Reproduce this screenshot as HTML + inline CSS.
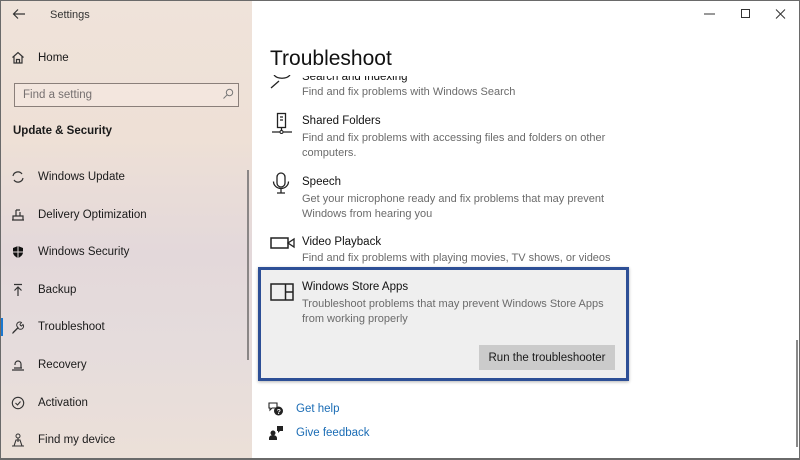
<!DOCTYPE html>
<html><head><meta charset="utf-8"><style>
*{margin:0;padding:0;box-sizing:border-box}
body{width:800px;height:460px;overflow:hidden;font-family:"Liberation Sans",sans-serif;background:#fff;position:relative}
.frame{position:absolute;inset:0;border:1px solid #6a6a6a;border-bottom-width:2px;pointer-events:none;z-index:9}
.side{position:absolute;left:0;top:0;width:252px;height:460px;background:linear-gradient(180deg,#efe3da 0%,#eee0d6 30%,#e3d8da 55%,#e5dcdc 75%,#ece0d8 100%)}
.t{position:absolute;white-space:nowrap;margin-top:2px}
.nav{position:absolute;left:38px;font-size:11.5px;color:#1a1a1a;margin-top:2px}
.ic{position:absolute;left:11px}
.main .ti{position:absolute;left:302px;font-size:11.5px;color:#111}
.main .d{position:absolute;left:302px;font-size:11px;color:#6b6b6b;line-height:15px;margin-top:2px}
</style></head><body>
<div class="side">
 <svg class="ic" style="left:12px;top:8px" width="14" height="12" viewBox="0 0 14 12"><path d="M13 6H2M6 1.5L1.5 6 6 10.5" fill="none" stroke="#333" stroke-width="1.2"/></svg>
 <div class="t" style="left:50px;top:7px;font-size:11px;color:#333">Settings</div>
 <svg class="ic" style="top:51px" width="14" height="13" viewBox="0 0 14 13"><path d="M1.5 6.5L7 1.5l5.5 5M3 5.5V12h8V5.5M5.5 12V8.5h3V12" fill="none" stroke="#333" stroke-width="1.2"/></svg>
 <div class="nav" style="top:50px">Home</div>
 <div style="position:absolute;left:14px;top:83px;width:225px;height:24px;border:1px solid #8a7f7a;background:#f3e6de"></div>
 <div class="t" style="left:23px;top:87px;font-size:11.5px;color:#767070">Find a setting</div>
 <svg style="position:absolute;left:222px;top:88px" width="12" height="12" viewBox="0 0 12 12"><circle cx="7.5" cy="4.5" r="3.2" fill="none" stroke="#777"/><path d="M5.2 6.8L1.5 10.5" stroke="#777"/></svg>
 <div class="t" style="left:13px;top:123px;font-size:11.5px;font-weight:bold;color:#1a1a1a">Update &amp; Security</div>
 <div style="position:absolute;left:247px;top:170px;width:2px;height:190px;background:#8a8686"></div>
 <div style="position:absolute;left:0;top:318px;width:3px;height:18px;background:#1a78d0"></div>

 <svg class="ic" style="top:170px" width="14" height="14" viewBox="0 0 14 14"><path d="M2 6a5 5 0 0 1 9-2M12 8a5 5 0 0 1-9 2" fill="none" stroke="#333" stroke-width="1.2"/></svg>
 <div class="nav" style="top:169px">Windows Update</div>
 <svg class="ic" style="top:208px" width="14" height="14" viewBox="0 0 14 14"><path d="M1 12h12M2 12V8h10v4M5 8V2M9 8V4M5 2h4" fill="none" stroke="#333" stroke-width="1.2"/></svg>
 <div class="nav" style="top:207px">Delivery Optimization</div>
 <svg class="ic" style="top:245px" width="14" height="14" viewBox="0 0 14 14"><path d="M7 1L2 3v4c0 3 2.5 5 5 6 2.5-1 5-3 5-6V3z" fill="#111"/><path d="M7 1v12M2 7h10" stroke="#e5dcdc" stroke-width="1"/></svg>
 <div class="nav" style="top:244px">Windows Security</div>
 <svg class="ic" style="top:283px" width="14" height="14" viewBox="0 0 14 14"><path d="M3 1.5h8M7 13V4M3.5 7.5L7 4l3.5 3.5" fill="none" stroke="#333" stroke-width="1.2"/></svg>
 <div class="nav" style="top:282px">Backup</div>
 <svg class="ic" style="top:320px" width="14" height="14" viewBox="0 0 14 14"><path d="M2 12.5l5-5a3 3 0 0 1 3.5-5L9 4.5l.5 1 1 .5 1.5-1.5a3 3 0 0 1-5 3.5l-5 5z" fill="none" stroke="#333" stroke-width="1"/></svg>
 <div class="nav" style="top:319px">Troubleshoot</div>
 <svg class="ic" style="top:358px" width="14" height="14" viewBox="0 0 14 14"><path d="M1 12h12M3 10h8M4 6a3 3 0 1 1 6 0v4M4 6v1" fill="none" stroke="#333" stroke-width="1.2"/></svg>
 <div class="nav" style="top:357px">Recovery</div>
 <svg class="ic" style="top:396px" width="14" height="14" viewBox="0 0 14 14"><circle cx="7" cy="7" r="5.7" fill="none" stroke="#333" stroke-width="1.1"/><path d="M4.5 7l2 2 3-3.5" fill="none" stroke="#333" stroke-width="1.1"/></svg>
 <div class="nav" style="top:395px">Activation</div>
 <svg class="ic" style="top:433px" width="14" height="14" viewBox="0 0 14 14"><circle cx="7" cy="3" r="2" fill="none" stroke="#333"/><path d="M7 5v4M3 13l2-6h4l2 6zM1 13h12" fill="none" stroke="#333" stroke-width="1.1"/></svg>
 <div class="nav" style="top:432px">Find my device</div>
</div>

<div class="main">
 <svg style="position:absolute;left:703px;top:8px" width="90" height="12" viewBox="0 0 90 12"><path d="M1 6h11" stroke="#333"/><rect x="38.5" y="1.5" width="8" height="8" fill="none" stroke="#333"/><path d="M73 1.5l9 9M82 1.5l-9 9" stroke="#333"/></svg>
 <div class="t" style="left:302px;top:69px;font-size:11.5px;color:#111">Search and Indexing</div>
 <div style="position:absolute;left:260px;top:40px;width:400px;height:36px;background:#fff"></div>
 <div class="t" style="left:270px;top:45px;font-size:21px;color:#111">Troubleshoot</div>
 <svg style="position:absolute;left:270px;top:75px" width="24" height="14" viewBox="0 0 24 14"><path d="M4 0a9 6 0 0 0 16 0M9 6L1 13" fill="none" stroke="#222" stroke-width="1.3"/></svg>
 <div class="d t" style="top:83px">Find and fix problems with Windows Search</div>

 <svg style="position:absolute;left:271px;top:112px" width="22" height="24" viewBox="0 0 22 24"><rect x="6.5" y="1.5" width="8" height="14" fill="none" stroke="#222" stroke-width="1.3"/><path d="M9 5h3M9 8h3M10.5 15.5v4M1 20h20" stroke="#222" stroke-width="1.3"/><circle cx="10.5" cy="20" r="1.5" fill="#fff" stroke="#222"/></svg>
 <div class="ti t" style="top:113px">Shared Folders</div>
 <div class="d" style="top:129px">Find and fix problems with accessing files and folders on other<br>computers.</div>

 <svg style="position:absolute;left:271px;top:172px" width="20" height="24" viewBox="0 0 20 24"><rect x="6" y="1" width="8" height="14" rx="4" fill="none" stroke="#222" stroke-width="1.3"/><path d="M2.5 9.5a7.5 7 0 0 0 15 0M10 16.5v4M6 21h8" fill="none" stroke="#222" stroke-width="1.3"/></svg>
 <div class="ti t" style="top:174px">Speech</div>
 <div class="d" style="top:190px">Get your microphone ready and fix problems that may prevent<br>Windows from hearing you</div>

 <svg style="position:absolute;left:270px;top:236px" width="26" height="14" viewBox="0 0 26 14"><rect x="1" y="2" width="17" height="10" fill="none" stroke="#222" stroke-width="1.5"/><path d="M18 7l6-4v8z" fill="none" stroke="#222" stroke-width="1.3"/></svg>
 <div class="ti t" style="top:234px">Video Playback</div>
 <div class="d t" style="top:249px">Find and fix problems with playing movies, TV shows, or videos</div>

 <div style="position:absolute;left:258px;top:267px;width:371px;height:114px;background:#efefef;border:3px solid #2d4f96;box-shadow:0 1px 3px rgba(0,0,0,.3)"></div>
 <svg style="position:absolute;left:270px;top:283px" width="24" height="18" viewBox="0 0 24 18"><rect x="1" y="1" width="22" height="16" fill="none" stroke="#222" stroke-width="1.5"/><path d="M15.5 1v16M15.5 9h7" stroke="#222" stroke-width="1.5"/></svg>
 <div class="ti t" style="top:279px">Windows Store Apps</div>
 <div class="d" style="top:295px">Troubleshoot problems that may prevent Windows Store Apps<br>from working properly</div>
 <div style="position:absolute;left:479px;top:345px;width:136px;height:25px;background:#cbcbcb;font-size:11.5px;color:#1a1a1a;text-align:center;line-height:27px">Run the troubleshooter</div>

 <svg style="position:absolute;left:268px;top:401px" width="16" height="16" viewBox="0 0 16 16"><path d="M1 2h8v5H4L2 9V7H1z" fill="none" stroke="#222" stroke-width="1.1"/><circle cx="10.5" cy="10" r="4.5" fill="#222"/><text x="8.6" y="12.8" font-size="7" fill="#fff" font-family="Liberation Sans" font-weight="bold">?</text></svg>
 <div class="t" style="left:296px;top:401px;font-size:11.5px;color:#1a6cb5">Get help</div>
 <svg style="position:absolute;left:268px;top:425px" width="16" height="16" viewBox="0 0 16 16"><path d="M9 1h6v5h-3l-2 2V6H9z" fill="#222"/><circle cx="5" cy="8" r="2.5" fill="#222"/><path d="M1 15v-2a4 3 0 0 1 8 0v2z" fill="#222"/></svg>
 <div class="t" style="left:296px;top:425px;font-size:11.5px;color:#1a6cb5">Give feedback</div>

 <div style="position:absolute;left:796px;top:340px;width:2px;height:107px;background:#8a8a8a"></div>
</div>
<div class="frame"></div>
</body></html>
